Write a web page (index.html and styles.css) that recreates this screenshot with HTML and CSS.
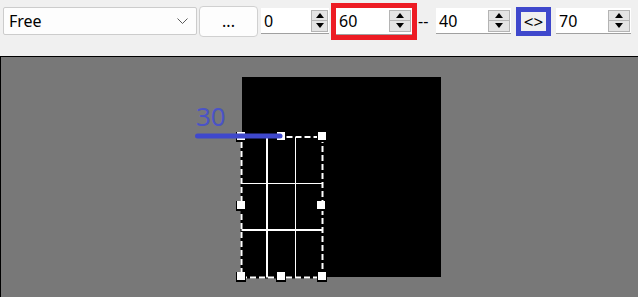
FILE: index.html
```html
<!DOCTYPE html>
<html>
<head>
<meta charset="utf-8">
<link rel="stylesheet" href="styles.css">
</head>
<body>
<div class="toolbar">
  <div class="combo">
    <span class="combo-text">Free</span>
    <svg class="chevron" width="11" height="6" viewBox="0 0 11 6"><polyline points="0.5,0.5 5.5,5.5 10.5,0.5" fill="none" stroke="#5a5a5a" stroke-width="1"/></svg>
  </div>
  <button class="dots">...</button>
  <div class="spin spin-narrow">
    <span class="val">0</span>
    <div class="arrows"><div class="up"><i></i></div><div class="dn"><i></i></div></div>
  </div>
  <div class="hl-red">
    <div class="spin spin-fill">
      <span class="val">60</span>
      <div class="arrows"><div class="up"><i></i></div><div class="dn"><i></i></div></div>
    </div>
  </div>
  <span class="dash">--</span>
  <div class="spin">
    <span class="val">40</span>
    <div class="arrows"><div class="up"><i></i></div><div class="dn"><i></i></div></div>
  </div>
  <div class="hl-blue"><span>&lt;&gt;</span></div>
  <div class="spin spin-last">
    <span class="val">70</span>
    <div class="arrows"><div class="up"><i></i></div><div class="dn"><i></i></div></div>
  </div>
</div>
<div class="canvas">
  <div class="image"></div>
  <svg class="overlay" width="638" height="241" viewBox="0 56 638 241">
    <text x="196" y="126" class="measure">30</text>
    <rect x="241.5" y="137" width="81" height="140.5" fill="#000" stroke="#000" stroke-width="2"/>
    <rect x="241.5" y="137" width="81" height="140.5" fill="none" stroke="#fff" stroke-width="2" stroke-dasharray="6 3"/>
    <line x1="267" y1="137" x2="267" y2="277.5" stroke="#fff" stroke-width="2"/>
    <line x1="295.5" y1="137" x2="295.5" y2="277.5" stroke="#fff" stroke-width="1"/>
    <line x1="241.5" y1="183.5" x2="322.5" y2="183.5" stroke="#fff" stroke-width="1"/>
    <line x1="241.5" y1="230" x2="322.5" y2="230" stroke="#fff" stroke-width="2"/>
    <g class="handles">
      <rect x="236" y="132" width="10" height="10" fill="#000"/><rect x="237" y="132" width="8" height="8" fill="#fff"/>
      <rect x="276" y="132" width="10" height="10" fill="#000"/><rect x="277" y="132" width="8" height="8" fill="#fff"/>
      <rect x="317" y="132" width="10" height="10" fill="#000"/><rect x="318" y="132" width="8" height="8" fill="#fff"/>
      <rect x="236" y="201" width="10" height="10" fill="#000"/><rect x="237" y="201" width="8" height="8" fill="#fff"/>
      <rect x="317" y="201" width="10" height="10" fill="#000"/><rect x="317" y="201" width="8" height="8" fill="#fff"/>
      <rect x="236" y="272" width="10" height="10" fill="#000"/><rect x="237" y="272" width="8" height="8" fill="#fff"/>
      <rect x="276" y="272" width="10" height="10" fill="#000"/><rect x="277" y="272" width="8" height="8" fill="#fff"/>
      <rect x="317" y="272" width="10" height="10" fill="#000"/><rect x="318" y="272" width="8" height="8" fill="#fff"/>
    </g>
    <line x1="197.5" y1="136" x2="280" y2="136" stroke="#3f48cc" stroke-width="5" stroke-linecap="round"/>
  </svg>
</div>
</body>
</html>
```
FILE: styles.css
```css
html, body {
  margin: 0;
  padding: 0;
  background: #f0f0f0;
  font-family: "Noto Sans", "Open Sans", sans-serif;
  font-size: 16px;
  color: #000;
  overflow: hidden;
}

.toolbar {
  height: 56px;
  box-sizing: border-box;
  padding-bottom: 14px;
  display: flex;
  align-items: center;
}

.combo {
  margin-left: 3px;
  width: 194px;
  height: 28px;
  box-sizing: border-box;
  border: 1px solid #cccccc;
  border-radius: 2px;
  background: #fdfdfd;
  display: flex;
  align-items: center;
  padding: 0 8px 0 5px;
}

.combo-text {
  flex: 1;
  line-height: 1;
}

.chevron {
  display: block;
}

.dots {
  margin-left: 2px;
  width: 59px;
  height: 31px;
  box-sizing: border-box;
  border: 1px solid #d0d0d0;
  border-radius: 4px;
  background: #fdfdfd;
  font-family: "Noto Sans", "Open Sans", sans-serif;
  font-size: 16px;
  color: #000;
  padding: 0;
  line-height: 1;
}

.spin {
  width: 75px;
  height: 26px;
  box-sizing: border-box;
  background: #fff;
  border-bottom: 1px solid #a0a0a0;
  display: flex;
  align-items: center;
}

.spin-narrow {
  margin-left: 3px;
  width: 68px;
}

.spin-narrow .arrows {
  width: 17px;
}

.spin-fill {
  width: 76px;
  height: 27px;
}

.spin-last {
  margin-left: 5px;
}

.val {
  flex: 1;
  padding-left: 3px;
  line-height: 1;
}

.arrows {
  width: 22px;
  height: 22px;
  box-sizing: border-box;
  margin-right: 1px;
  border: 1px solid #b4b4b4;
  background: #e4e4e4;
  display: flex;
  flex-direction: column;
}

.up, .dn {
  flex: 1;
  display: flex;
  align-items: center;
  justify-content: center;
}

.up {
  border-bottom: 1px solid #b4b4b4;
}

.up i, .dn i {
  display: block;
  width: 0;
  height: 0;
  border-left: 4.5px solid transparent;
  border-right: 4.5px solid transparent;
}

.up i {
  border-bottom: 5px solid #000;
}

.dn i {
  border-top: 5px solid #000;
}

.hl-red {
  margin-left: 2px;
  width: 86px;
  height: 37px;
  box-sizing: border-box;
  border: 5px solid #ed1c24;
  display: flex;
}

.dash {
  margin-left: 1px;
  width: 18px;
  line-height: 1;
}

.hl-blue {
  margin-left: 5px;
  width: 35px;
  height: 29px;
  box-sizing: border-box;
  border: 5px solid #3f48cc;
  background: #f0f0f0;
  display: flex;
  align-items: center;
  justify-content: center;
  font-size: 17px;
  line-height: 1;
}

.canvas {
  position: relative;
  height: 241px;
  box-sizing: border-box;
  border-top: 1px solid #000;
  border-left: 1px solid #000;
  background: #787878;
  overflow: hidden;
}

.image {
  position: absolute;
  left: 241px;
  top: 20px;
  width: 199px;
  height: 200px;
  background: #000;
}

.overlay {
  position: absolute;
  left: -1px;
  top: -1px;
}

.measure {
  font-family: "Noto Sans", "Open Sans", sans-serif;
  font-size: 26px;
  fill: #4a53c6;
}
```
